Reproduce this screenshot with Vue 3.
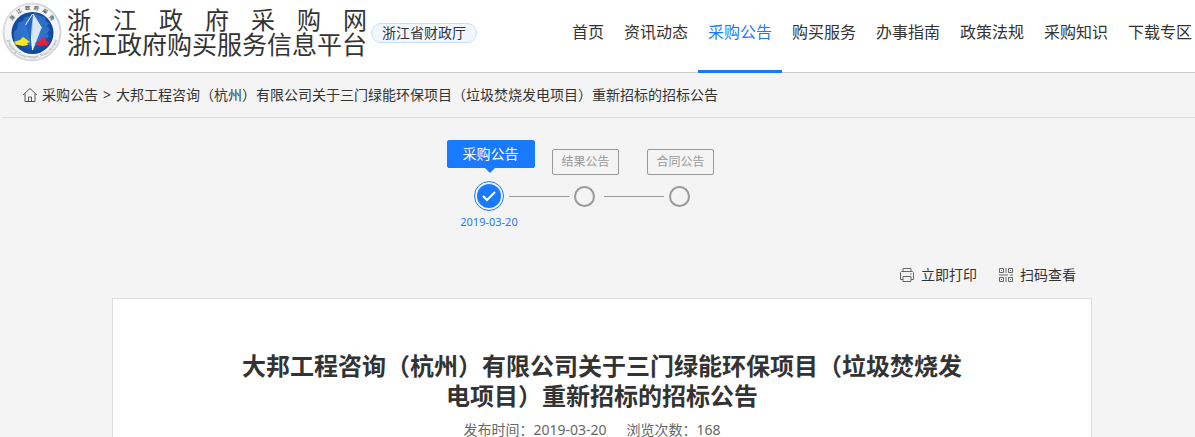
<template>
    <div class="page">
        <header class="header">
            <div class="header-inner">
                <svg class="emblem" viewBox="0 0 60 60" aria-hidden="true">
                    <defs>
                        <linearGradient id="rim" x1="0" y1="0" x2="1" y2="1">
                            <stop offset="0" stop-color="#e3e7ea" />
                            <stop offset="0.5" stop-color="#cdd2d5" />
                            <stop offset="1" stop-color="#dcdcdc" />
                        </linearGradient>
                        <radialGradient id="sea">
                            <stop offset="0" stop-color="#2468c8" />
                            <stop offset="0.7" stop-color="#1755b0" />
                            <stop offset="1" stop-color="#0f469a" />
                        </radialGradient>
                        <path id="arc-top" d="M7.500 30a22.500 22.500 0 0 1 45 0" />
                        <path id="arc-bottom" d="M3.500 30a26.500 26.500 0 0 0 53 0" />
                    </defs>
                    <circle cx="30" cy="30" r="28.500" fill="#f4f5f6" stroke="url(#rim)" stroke-width="2" />
                    <circle cx="30.500" cy="31" r="21" fill="url(#sea)" />
                    <path d="M12 30l3-3 1-6 5-2 2-4 6-1 3-3 7 3 4 1 1 4 3 2-2 3 3 4-3 3 2 4-5 2-4 5-8 2-7-2-6-3-4 1-1-5z" fill="#3d82d8" opacity="0.6" />
                    <path d="M30.500 13L24 23l3 10 3.500 15z" fill="#2465c2" />
                    <path d="M30.500 13l-1.500 24 1 11h1z" fill="#fff" />
                    <path d="M31 13l8.500 13L31 48z" fill="#d9e7f7" />
                    <path d="M30.500 12L23.500 23M31 12l8.500 14" stroke="#fff" stroke-width="1" />
                    <path d="M11 40l7-2 3-3 3 2 4 3-3 1 1 2-5 1-5-1-5-1 3-1z" fill="#f8e81c" />
                    <path d="M33 41l5-2 3-4 3 2v2l4 2-3 1 2 2-5-1-5 1-1-1z" fill="#ee1c35" />
                    <text v-for="(char, index) in sealName" :key="char" class="seal-cn">
                        <textPath href="#arc-top" :startOffset="`${index * 12 + 20}%`" text-anchor="middle">{{ char }}</textPath>
                    </text>
                    <text class="seal-en">
                        <textPath href="#arc-bottom" startOffset="50%" text-anchor="middle">Zhejiang Government Procurement</textPath>
                    </text>
                </svg>
                <div class="brand">
                    <div class="brand-line brand-wide">
                        <span v-for="char in siteName" :key="char">{{ char }}</span>
                    </div>
                    <div class="brand-line">浙江政府购买服务信息平台</div>
                </div>
                <span class="region">浙江省财政厅</span>
                <nav class="nav">
                    <a
                        v-for="item in navItems"
                        :key="item"
                        href="#"
                        class="nav-item"
                        :class="{ active: item === currentNav }"
                    >{{ item }}</a>
                </nav>
            </div>
        </header>

        <main class="main">
            <div class="breadcrumb">
                <svg class="icon-home" viewBox="0 0 16 16" aria-hidden="true">
                    <path d="M1 8L8 1.500 15 8M3 6.500v8h10v-8M6.500 14.500V10h3v4.500" />
                </svg>
                <a href="#">采购公告</a>
                <span class="separator">&gt;</span>
                <span>{{ title }}</span>
            </div>

            <ol class="steps">
                <li v-for="step in steps" :key="step.name" class="step" :class="{ done: step.date }">
                    <div class="step-head">
                        <span class="step-label">{{ step.name }}</span>
                    </div>
                    <div class="step-node">
                        <span class="step-circle">
                            <svg v-if="step.date" viewBox="0 0 24 24" aria-hidden="true">
                                <circle cx="12" cy="12" r="12" />
                                <path d="M6 12l4 4 8-8" />
                            </svg>
                        </span>
                    </div>
                    <div class="step-date">{{ step.date }}</div>
                </li>
            </ol>

            <div class="content">
                <div class="tools">
                    <button type="button" class="tool">
                        <svg viewBox="0 0 16 16" aria-hidden="true">
                            <path d="M4 4.500v-3h8v3M4 12.500H1.500v-7l1-1h11l1 1v7H12M4 9.500h8v5H4zM11 7h1.500" />
                        </svg>
                        立即打印
                    </button>
                    <button type="button" class="tool">
                        <svg viewBox="0 0 16 16" aria-hidden="true">
                            <path d="M1.500 1.500h4v4h-4zM10.500 1.500h4v4h-4zM1.500 10.500h4v4h-4zM10.500 10.500h4v4h-4zM8 1v5M1 8h9M12 8h3M8 10v5M3 3.500h1M12 3.500h1M3 12.500h1M12 12.500h1" />
                        </svg>
                        扫码查看
                    </button>
                </div>
                <article class="notice">
                    <h1 class="notice-title">{{ title }}</h1>
                    <p class="notice-meta">
                        <span>发布时间：2019-03-20</span>
                        <span>浏览次数：168</span>
                    </p>
                </article>
            </div>
        </main>
    </div>
</template>

<script setup>
import { ref } from 'vue';

const siteName = [...'浙江政府采购网']
const sealName = [...'浙江政府采购']
const title = '大邦工程咨询（杭州）有限公司关于三门绿能环保项目（垃圾焚烧发电项目）重新招标的招标公告'

const currentNav = ref('采购公告')
const navItems = ['首页', '资讯动态', '采购公告', '购买服务', '办事指南', '政策法规', '采购知识', '下载专区']

const steps = ref([
    { name: '采购公告', date: '2019-03-20' },
    { name: '结果公告', date: '' },
    { name: '合同公告', date: '' }
])
</script>

<style>
body {
    margin: 0;
    background: #f4f4f4;
}
</style>

<style scoped>
.page {
    height: 100vh;
    overflow: hidden;
    background: #f4f4f4;
    color: #333;
    font-family: "Noto Sans", "Noto Sans CJK SC", sans-serif;
    font-size: 14px;
    line-height: 20px;
}

a {
    color: inherit;
    text-decoration: none;
}

.header {
    background: #fff;
    border-bottom: 1px solid #ccc;
}

.header-inner {
    display: flex;
    align-items: flex-start;
    box-sizing: border-box;
    min-width: 1200px;
    height: 72px;
    margin-left: 2px;
}

.emblem {
    flex: none;
    width: 60px;
    height: 60px;
    margin-top: 2px;
}

.seal-cn {
    font-family: "Noto Sans CJK SC", sans-serif;
    font-size: 5px;
    font-weight: 700;
    fill: #555;
}

.seal-en {
    font-size: 4px;
    fill: #8a8f94;
}

.brand {
    flex: none;
    margin: 7px 4px 0 5px;
    font-size: 25px;
    line-height: 25px;
}

.brand-line {
    white-space: nowrap;
}

.brand-wide {
    display: flex;
    justify-content: space-between;
    font-size: 24px;
}

.region {
    flex: none;
    box-sizing: border-box;
    height: 20px;
    margin-top: 23px;
    padding: 0 10px;
    border: 1px solid #c5dffc;
    border-radius: 10px;
    background: #f0f7ff;
    line-height: 18px;
}

.nav {
    display: flex;
    flex: none;
    align-self: stretch;
    margin-left: auto;
}

.nav-item {
    height: 70px;
    padding: 0 10px;
    font-size: 16px;
    line-height: 64px;
    white-space: nowrap;
}

.nav-item.active {
    border-bottom: 3px solid #1a7aff;
    color: #1a7aff;
}

.main {
    min-width: 1200px;
    margin-left: 2px;
}

.breadcrumb {
    display: flex;
    align-items: center;
    height: 44px;
    padding-left: 20px;
    border-bottom: 1px solid #ddd;
}

.icon-home {
    width: 16px;
    height: 16px;
    margin-right: 4px;
    fill: none;
    stroke: #555;
}

.separator {
    margin: 0 5px;
}

.steps {
    display: flex;
    justify-content: center;
    margin: 0;
    padding: 22px 36px 0 0;
    list-style: none;
}

.step {
    display: flex;
    flex-direction: column;
    align-items: center;
    width: 95px;
    color: #999;
}

.step-head {
    display: flex;
    align-items: flex-end;
    height: 35px;
    padding-left: 3px;
}

.step-label {
    box-sizing: border-box;
    padding: 0 8px;
    border: 1px solid #999;
    border-radius: 2px;
    font-size: 12px;
    line-height: 24px;
}

.done .step-label {
    position: relative;
    margin-bottom: 7px;
    padding: 0 15px;
    border-color: #1a7aff;
    background: #1a7aff;
    color: #fff;
    font-size: 14px;
    line-height: 26px;
}

.done .step-label::after {
    content: "";
    position: absolute;
    top: 100%;
    left: 50%;
    margin-left: -7px;
    border: 6px solid transparent;
    border-top-color: #1a7aff;
    border-bottom-width: 0;
}

.step-node {
    display: grid;
    grid-template-columns: 1fr 30px 1fr;
    align-items: center;
    justify-items: center;
    width: 100%;
    height: 42px;
}

.step-node::before,
.step-node::after {
    content: "";
    width: 100%;
    height: 1px;
}

.step-node::after {
    width: calc(100% - 5px);
    justify-self: end;
}

.step + .step .step-node::before,
.step:not(:last-child) .step-node::after {
    background: #999;
}

.step-circle {
    box-sizing: border-box;
    width: 21px;
    height: 21px;
    border: 2px solid #999;
    border-radius: 50%;
}

.done .step-circle {
    display: flex;
    width: 30px;
    height: 30px;
    padding: 2px;
    border: 1px solid #1a7aff;
}

.step-circle svg {
    width: 24px;
    height: 24px;
    margin: auto;
    fill: #1a7aff;
}

.step-circle path {
    fill: none;
    stroke: #fff;
    stroke-width: 2;
}

.step-date {
    height: 20px;
    margin-top: -5px;
    color: #1a7aff;
    font-size: 11px;
    line-height: 20px;
}

.content {
    max-width: 980px;
    margin: 0 auto;
}

.tools {
    display: flex;
    justify-content: flex-end;
    gap: 21px;
    padding: 33px 16px 13px 0;
}

.tool {
    display: flex;
    align-items: center;
    gap: 6px;
    padding: 0;
    border: 0;
    background: none;
    color: #333;
    font: inherit;
    cursor: pointer;
}

.tool svg {
    width: 16px;
    height: 16px;
    fill: none;
    stroke: #666;
}

.notice {
    padding: 52px 120px 40px;
    border: 1px solid #ddd;
    background: #fff;
    text-align: center;
}

.notice-title {
    margin: 0;
    font-size: 24px;
    font-weight: 700;
    line-height: 30px;
}

.notice-meta {
    display: flex;
    justify-content: center;
    margin: 9px 0 0;
    color: #666;
}

.notice-meta span {
    margin-right: 20px;
}
</style>
